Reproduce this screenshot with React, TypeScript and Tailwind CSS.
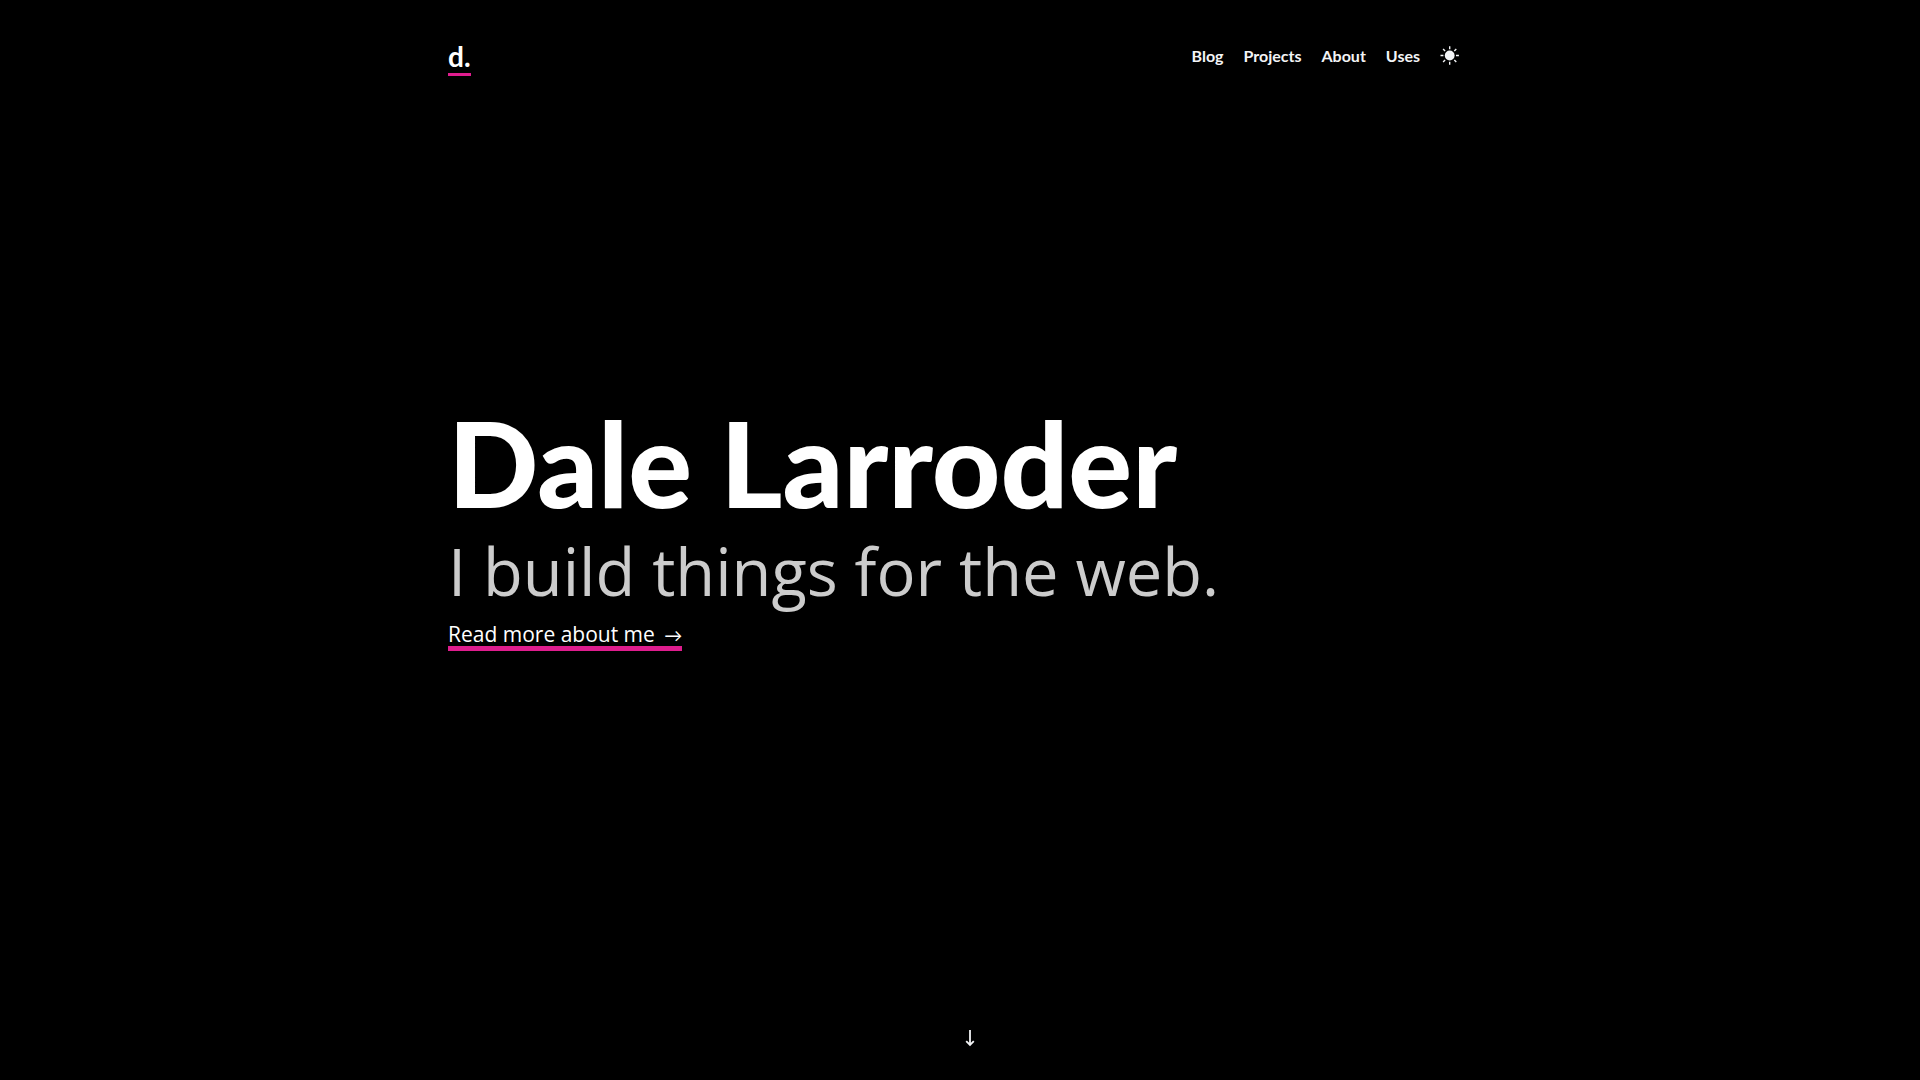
const links = ['Blog', 'Projects', 'About', 'Uses'];

function SunIcon() {
  return (
    <svg viewBox="0 0 20 20" className="size-5" fill="currentColor" stroke="currentColor" aria-hidden="true">
      <circle cx="9.7" cy="9.5" r="4.9" stroke="none" />
      <path
        d="M9.7 .3v2.9M9.7 15.8v2.9M.5 9.5h2.9M16 9.5h2.9M3.1 2.9l2 2M14.3 14.1l2 2M3.1 16.1l2-2M14.3 4.9l2-2"
        strokeWidth="1.4"
        fill="none"
      />
    </svg>
  );
}

function ArrowDownIcon() {
  return (
    <svg viewBox="0 0 12 18" className="h-[18px] w-3" fill="none" stroke="currentColor" aria-hidden="true">
      <path d="M6 1v14" strokeWidth="1.8" />
      <path d="M2.2 12.2L6 16l3.8-3.8" strokeWidth="1.8" />
    </svg>
  );
}

export default function App() {
  return (
    <div className="flex min-h-screen flex-col bg-black font-['Open_Sans',sans-serif] text-white">
      <header className="mx-auto flex w-full max-w-5xl items-start justify-between pt-10 pr-3 font-['Lato',sans-serif] font-bold">
        <a href="#home" className="border-b-3 border-[#e11d8f] text-[28px] leading-[33px]">
          d.
        </a>
        <nav className="flex items-center gap-5 pt-[5px] text-base leading-[22px] text-gray-100">
          {links.map((label) => (
            <a key={label} href={`#${label.toLowerCase()}`}>
              {label}
            </a>
          ))}
          <button type="button" aria-label="Toggle color theme">
            <SunIcon />
          </button>
        </nav>
      </header>
      <main className="mx-auto flex w-full max-w-5xl grow flex-col items-start justify-center pb-[54px]">
        <h1 className="font-['Lato',sans-serif] text-[119px] leading-[122px] font-black">Dale Larroder</h1>
        <p className="mt-2 text-[65px] leading-[80px] text-[#cccccc]">I build things for the web.</p>
        <a href="#about" className="mt-[11px] border-b-5 border-[#de1d8d] text-[21px] leading-6">
          Read more about me <span className="ml-1 font-['Lato',sans-serif] text-lg leading-none">→</span>
        </a>
      </main>
      <footer className="mx-auto flex w-full max-w-5xl justify-center pb-[33px] pl-5">
        <a href="#more" aria-label="Scroll down" className="text-gray-100">
          <ArrowDownIcon />
        </a>
      </footer>
    </div>
  );
}
